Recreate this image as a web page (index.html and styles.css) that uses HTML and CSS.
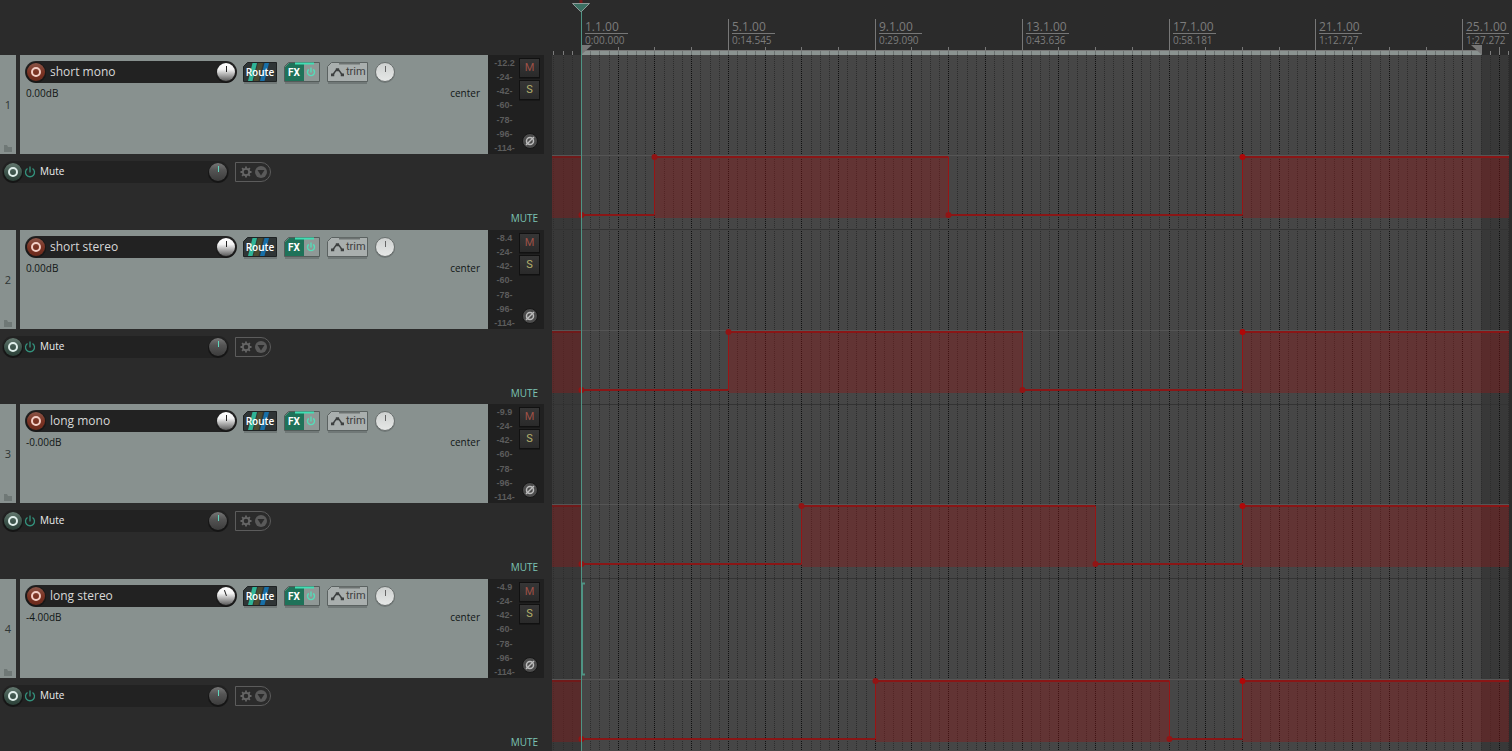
FILE: index.html
```html
<!DOCTYPE html>
<html lang="en">
<head>
<meta charset="utf-8">
<title>Tracks</title>
<link rel="stylesheet" href="styles.css">
</head>
<body>
<svg class="defs" width="0" height="0" aria-hidden="true">
  <defs>
    <linearGradient id="g-rec" x1="0" y1="0" x2="0" y2="1"><stop offset="0" stop-color="#8a5548"/><stop offset=".5" stop-color="#7c3424"/><stop offset="1" stop-color="#6b2a1c"/></linearGradient>
    <linearGradient id="g-arm" x1="0" y1="0" x2="0" y2="1"><stop offset="0" stop-color="#64786f"/><stop offset=".5" stop-color="#3f574e"/><stop offset="1" stop-color="#2c4038"/></linearGradient>
    <linearGradient id="g-vol" x1="0" y1="0" x2="0" y2="1"><stop offset="0" stop-color="#fff"/><stop offset=".35" stop-color="#f4f4f4"/><stop offset="1" stop-color="#5c5c5c"/></linearGradient>
    <linearGradient id="g-env" x1="0" y1="0" x2="0" y2="1"><stop offset="0" stop-color="#767676"/><stop offset=".4" stop-color="#545454"/><stop offset="1" stop-color="#3c3c3c"/></linearGradient>
    <linearGradient id="g-pan" x1="0" y1="0" x2="0" y2="1"><stop offset="0" stop-color="#cdd0cf"/><stop offset="1" stop-color="#e6e8e7"/></linearGradient>
    <symbol id="rec" viewBox="0 0 22 22"><circle cx="11" cy="12" r="10" fill="#000" opacity=".35"/><circle cx="11" cy="11" r="10" fill="#1d1a19"/><circle cx="11" cy="11" r="9" fill="url(#g-rec)"/><circle cx="11" cy="11" r="4" fill="none" stroke="#f3cfc6" stroke-width="2"/></symbol>
    <symbol id="arm" viewBox="0 0 22 22"><circle cx="11" cy="12" r="10" fill="#151515"/><circle cx="11" cy="11" r="9" fill="url(#g-arm)"/><circle cx="11" cy="11" r="4" fill="none" stroke="#dfeeea" stroke-width="2"/></symbol>
    <symbol id="vol" viewBox="0 0 22 22"><circle cx="11" cy="12" r="10" fill="#151515"/><circle cx="11" cy="11" r="10" fill="#222"/><circle cx="11" cy="11" r="9" fill="url(#g-vol)"/></symbol>
    <symbol id="envknob" viewBox="0 0 22 22"><circle cx="11" cy="12" r="10" fill="#151515"/><circle cx="11" cy="11" r="9" fill="url(#g-env)"/><path d="M11.500 5v6" stroke="#5fd6bd" fill="none"/></symbol>
    <symbol id="pan" viewBox="0 0 22 22"><circle cx="11" cy="12" r="10" fill="#6f7776"/><circle cx="11" cy="11" r="9.500" fill="url(#g-pan)" stroke="#686e6d"/><path d="M11.500 5v6" stroke="#666" fill="none"/></symbol>
    <symbol id="power" viewBox="0 0 12 12"><path d="M3.500 2.500a4.500 4.500 0 1 0 5 0M6 .5v6" fill="none" stroke="currentColor" stroke-width="1.300"/></symbol>
    <symbol id="power-small" viewBox="0 0 12 12"><path d="M3.800 3.400a3.500 3.500 0 1 0 4.400 0M6 1.500v5" fill="none" stroke="currentColor" stroke-width="1.400"/></symbol>
    <symbol id="folder" viewBox="0 0 8 7"><path d="M0 0h3l1 2h4v5H0z" fill="#6f7876"/></symbol>
    <symbol id="trim" viewBox="0 0 14 10"><path d="M2 8L5.500 3H8.500L12 8" fill="none" stroke="#3d4040" stroke-width="1.600"/><path d="M0 6.500h3.500v3H0zM5.200 1h3.500v3.300h-3.500zM10.500 6.500H14v3h-3.500z" fill="#3d4040"/></symbol>
    <symbol id="phase" viewBox="0 0 16 16"><circle cx="8" cy="8" r="7.500" fill="#4c4c4c" stroke="#171717"/><circle cx="8" cy="8" r="3.500" fill="none" stroke="#bdbdbd" stroke-width="1.500"/><path d="M4 12L12 4" stroke="#bdbdbd" stroke-width="1.500"/></symbol>
    <symbol id="gear" viewBox="0 0 12 12"><circle cx="6" cy="6" r="3.200" fill="none" stroke="#666" stroke-width="1.800"/><g stroke="#666" stroke-width="1.800"><path d="M6 .5v2M6 9.500v2M.5 6h2M9.500 6h2M2.100 2.100l1.500 1.500M8.400 8.400l1.500 1.500M9.900 2.100L8.400 3.600M3.600 8.400L2.100 9.900"/></g></symbol>
    <symbol id="down" viewBox="0 0 12 12"><circle cx="6" cy="6" r="6" fill="#5a5a5a"/><path d="M2.500 4h7L6 9.500z" fill="#2b2b2b"/></symbol>
  </defs>
</svg>
<div class="app">
  <div class="corner"></div>
  <header class="ruler"><svg class="fill" id="ruler"></svg><div class="marks" id="marks"></div></header>
  <main class="tracks" id="tracks"></main>
  <section class="arrange"><svg class="fill" id="arrange"></svg></section>
  <svg class="cursor" aria-hidden="true"><path d="M9 0v3" stroke="#7a1c1c" stroke-width="3"/><path d="M9.500 10v4000" stroke="#4f9484"/><path d="M.5 3.500h17L9.500 11.500H8.500z" fill="#3b6f62" stroke="#8f9a98"/></svg>
</div>
<script src="app.js"></script>
</body>
</html>
```
FILE: styles.css
```css
* { box-sizing: border-box; }
body { margin: 0; background: #2b2b2b; color: #ddd; font: 12px "Open Sans", sans-serif; }
button, input { font: inherit; color: inherit; border: 0; padding: 0; margin: 0; background: none; }
svg { display: block; }
.defs { position: absolute; }
.app { position: relative; display: grid; grid-template-columns: 552px 1fr; grid-template-rows: 55px 1fr; height: 100vh; overflow: hidden; }
.fill { width: 100%; height: 100%; }
.ruler { position: relative; overflow: hidden; margin-right: 3px; }
.mark { position: absolute; top: 21px; width: 43px; color: #7c7c7c; font-size: 12px; line-height: 12px; white-space: nowrap; }
.mark span { display: block; }
.mark .time { border-top: 1px solid #777; font-size: 10px; line-height: 13px; }
.cursor { position: absolute; left: 572px; top: 0; width: 18px; height: 100%; }
.arrange { overflow: hidden; min-width: 0; margin-right: 3px; }
.tracks { overflow: hidden; display: grid; grid-template-rows: 175px 174px 175px 175px; min-height: 0; }
.main { display: flex; height: 99px; }
.number { position: relative; width: 16px; margin-right: 4px; background: #88918f; color: #2f3534; font-size: 11px; line-height: 100px; text-align: center; }
.number svg { position: absolute; left: 4px; bottom: 2px; width: 8px; height: 7px; }
.panel { width: 468px; background: #88918f; }
.controls { display: flex; align-items: center; height: 22px; margin: 6px 0 0 5px; }
.namebar { display: flex; align-items: center; width: 212px; height: 22px; background: #222; border-radius: 11px; }
.namebar input { flex: 1; min-width: 0; margin-left: 3px; font-size: 12px; line-height: 20px; color: #d8d8d8; }
.knob, .knob svg { width: 22px; height: 22px; }
.route { position: relative; width: 34px; height: 20px; margin-left: 6px; }
.route svg, .box svg.back { position: absolute; left: 0; top: 0; width: 100%; height: 100%; overflow: visible; }
.route span { position: relative; color: #fff; font-size: 10px; font-weight: 600; line-height: 20px; }
.box { position: relative; display: flex; align-items: center; height: 20px; }
.fx { width: 36px; margin-left: 7px; }
.fx .label { position: relative; width: 20px; height: 20px; color: #fff; font: bold 10px/22px Roboto, sans-serif; text-align: center; }
.fx .power { position: relative; width: 14px; height: 12px; padding-left: 1px; color: #55dcb8; }
.power svg { width: 12px; height: 12px; }
.trim { width: 41px; margin-left: 7px; color: #3d4040; font: 11px/22px Roboto, sans-serif; gap: 2px; padding-left: 4px; }
.trim .icon { position: relative; width: 13px; height: 10px; }
.trim span { position: relative; }
.pan { margin-left: 6px; }
.values { display: flex; justify-content: space-between; padding: 3px 8px 0 6px; color: #111616; font-size: 10px; line-height: 14px; }
.meter { display: flex; justify-content: space-between; width: 56px; background: #202020; padding: 0 4px 0 5px; }
.scale { display: flex; flex-direction: column; justify-content: space-between; width: 23px; padding: 3px 0 1px; color: #5c5c5c; font: bold 9px/10px "Liberation Sans", sans-serif; text-align: center; white-space: nowrap; }
.side { display: flex; flex-direction: column; align-items: center; width: 21px; padding-top: 3px; gap: 2px; }
.side .ms { width: 21px; height: 20px; border: 1px solid #111; background: linear-gradient(#363636, #2a2a2a); font: 11px/18px Roboto, sans-serif; box-shadow: 0 1px #181818; }
.ms.m { color: #9c5046; }
.ms.s { color: #b3b06c; }
.side .phase { width: 16px; height: 16px; margin-top: 31px; }
.phase svg { width: 16px; height: 16px; }
.envelope { display: flex; align-items: center; height: 22px; margin: 7px 0 0 2px; }
.envbar { display: flex; align-items: center; width: 227px; height: 22px; background: #222; border-radius: 11px; color: #eee; font-size: 10px; line-height: 20px; }
.envbar .power { width: 12px; height: 12px; margin-right: 4px; color: #33917c; }
.envbar .name { flex: 1; height: 22px; }
.options { display: flex; align-items: center; gap: 3px; width: 36px; height: 20px; margin-left: 6px; padding-left: 4px; border: 1px solid #5c5c5c; border-radius: 0 10px 10px 0; }
.options button, .options svg { width: 12px; height: 12px; }
.lane { margin: 27px 14px 0 0; text-align: right; color: #7cc4b4; font-size: 10px; line-height: 16px; }
```
FILE: app.js
```js
const ORIGIN = 29, BAR = 36.72, END = 98;
const beatX = b => ORIGIN + Math.round(b * BAR / 4);
const use = id => `<svg><use href="#${id}"/></svg>`;

const tracks = [
  { name: 'short mono', db: '0.00dB', peak: '-12.2', top: 0, on: 2, off: 10, tilt: 0 },
  { name: 'short stereo', db: '0.00dB', peak: '-8.4', top: 175, on: 4, off: 12, tilt: 0 },
  { name: 'long mono', db: '-0.00dB', peak: '-9.9', top: 349, on: 6, off: 14, tilt: 0 },
  { name: 'long stereo', db: '-4.00dB', peak: '-4.9', top: 524, on: 8, off: 16, tilt: -20 }
];

document.getElementById('tracks').innerHTML = tracks.map((t, i) => `
<article class="track">
  <div class="main">
    <div class="number">${i + 1}${use('folder')}</div>
    <div class="panel">
      <div class="controls">
        <div class="namebar">
          <button class="knob" aria-label="Record arm">${use('rec')}</button>
          <input aria-label="Track name" value="${t.name}">
          <button class="knob" aria-label="Volume"><svg viewBox="0 0 22 22"><use href="#vol"/><path d="M11.5 5v6" stroke="#222" fill="none" transform="rotate(${t.tilt} 11 11)"/></svg></button>
        </div>
        <button class="route"><svg viewBox="0 0 34 20"><path d="M1 20h33v2H1z" fill="#707877"/><path d="M4.500.5h29v19H.5v-15z" fill="#2f3536" stroke="#1e2223"/><path d="M9.500 1h4.500L9.500 19H5z" fill="#2fb496"/><path d="M15 1h5l-4.500 18h-5z" fill="#4c4a30"/><path d="M21.500 1h4.500L21.500 19H17z" fill="#176fa8"/></svg><span>Route</span></button>
        <div class="box fx"><svg class="back" viewBox="0 0 36 20"><path d="M1 20h34v2H1z" fill="#707877"/><path d="M4.500.5h31v19H.5v-15z" fill="#8f9896" stroke="#545c5a"/><path d="M5 1h15v18H1V5z" fill="#1f7259"/><path d="M11 1.500h19" stroke="#3fe0b4" stroke-width="2"/></svg><button class="label">FX</button><button class="power" aria-label="FX bypass">${use('power-small')}</button></div>
        <button class="box trim"><svg class="back" viewBox="0 0 41 20"><path d="M1 20h39v2H1z" fill="#707877"/><path d="M4.500.5h36v19H.5v-15z" fill="#a9afae" stroke="#5b6261"/><path d="M12 1.500h21" stroke="#6c7271" stroke-width="2"/></svg><svg class="icon"><use href="#trim"/></svg><span>trim</span></button>
        <button class="knob pan" aria-label="Pan">${use('pan')}</button>
      </div>
      <div class="values"><span>${t.db}</span><span>center</span></div>
    </div>
    <div class="meter">
      <div class="scale">${[t.peak, '-24-', '-42-', '-60-', '-78-', '-96-', '-114-'].map(v => `<span>${v}</span>`).join('')}</div>
      <div class="side"><button class="ms m">M</button><button class="ms s">S</button><button class="phase" aria-label="Phase">${use('phase')}</button></div>
    </div>
  </div>
  <div class="envelope">
    <div class="envbar"><button class="knob" aria-label="Arm envelope">${use('arm')}</button><button class="power" aria-label="Bypass envelope">${use('power')}</button><span class="name">Mute</span><button class="knob" aria-label="Envelope value">${use('envknob')}</button></div>
    <div class="options"><button aria-label="Options">${use('gear')}</button><button aria-label="Menu">${use('down')}</button></div>
  </div>
  <div class="lane">MUTE</div>
</article>`).join('');

const end = beatX(END);
let r = `<path d="M${ORIGIN} 50.500H${end + 1}" stroke="#777"/><path d="M${ORIGIN} 51h${end - ORIGIN + 1}v4H${ORIGIN}z" fill="#8b9391"/>`;
for (let b = -3; b <= 101; b++) {
  const x = beatX(b) + .5;
  if (b <= 0 || b > END) r += `<path d="M${x} ${b % 4 ? 51 : 47}V55" stroke="#7c7c7c"/>`;
  else r += `<path d="M${x} 51V55" stroke="#6b7170"/>`;
  if (b % 16 === 0) r += `<path d="M${x} 19V51" stroke="#777"/>`;
  else if (b % 4 === 0) r += `<path d="M${x} 47V51" stroke="#777"/>`;
}
r += `<path d="M${ORIGIN} 45h11L${ORIGIN} 55z" fill="#777"/><path d="M${end + 1} 45h-11l11 10z" fill="#777"/>`;
document.getElementById('ruler').innerHTML = r;

const times = ['0:00.000', '0:14.545', '0:29.090', '0:43.636', '0:58.181', '1:12.727', '1:27.272'];
document.getElementById('marks').innerHTML = times.map((s, i) =>
  `<div class="mark" style="left:${beatX(i * 16) + 4}px"><span>${i * 4 + 1}.1.00</span><span class="time">${s}</span></div>`).join('');

let a = `<rect width="100%" height="100%" fill="#383838"/><rect x="${ORIGIN}" width="${end - ORIGIN}" height="100%" fill="#464646"/>`;
for (let b = -3; b <= 101; b++)
  a += `<path d="M${beatX(b) + .5} 0V2000" stroke="${b % 4 ? '#2c2c2c' : '#101010'}" stroke-dasharray="1 1"/>`;
for (const t of tracks) {
  const hi = t.top + 102, lo = t.top + 160, on = beatX(t.on * 4) + .5, off = beatX(t.off * 4) + .5, last = beatX(72) + .5, x0 = ORIGIN + .5;
  a += `<path d="M0 ${t.top + 100.5}H3000" stroke="#555"/><path d="M0 ${t.top + 174.5}H3000" stroke="#333"/>
  <path d="M0 ${hi}h${ORIGIN}v61H0z M${on} ${hi}H${off}v61H${on}z M${last} ${hi}H3000v61H${last}z" fill="#8c1818" fill-opacity=".4"/>
  <path d="M0 ${hi}H${ORIGIN}" stroke="#701a1a" stroke-width="2"/>
  <path d="M${x0} ${lo}H${on}M${on} ${hi}H${off}M${off} ${lo}H${last}M${last} ${hi}H3000" fill="none" stroke="#8a1616" stroke-width="2"/>
  <path d="M${on} ${lo}V${hi}M${off} ${hi}V${lo}M${last} ${lo}V${hi}" stroke="#9a1414"/>
  <g fill="#921414"><circle cx="${x0}" cy="${lo}" r="3"/><circle cx="${on}" cy="${hi}" r="3"/><circle cx="${off}" cy="${lo}" r="3"/></g><circle cx="${last}" cy="${hi}" r="3" fill="#b00808"/>`;
}
a += `<path d="M33 528.500H30V619.500H33" fill="none" stroke="#4f9484" stroke-width="2"/>`;
document.getElementById('arrange').innerHTML = a;
```
